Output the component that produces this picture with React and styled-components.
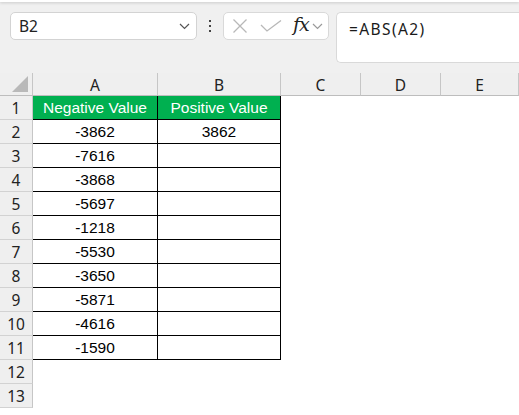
import React from "react";
import styled, {createGlobalStyle} from "styled-components";

const GlobalStyle = createGlobalStyle`
  html, body {
    margin: 0;
    padding: 0;
    background: #f0f0f0;
    overflow: hidden;
  }
  * {
    box-sizing: border-box;
  }
`;

const Page = styled.div`
  width: 519px;
  height: 415px;
  display: flex;
  flex-direction: column;
  background: #f0f0f0;
  font-family: "Liberation Sans", Arial, sans-serif;
  overflow: hidden;
`;

const RibbonEdge = styled.div`
  height: 2px;
  background: #ffffff;
  box-shadow: 0 1px 3px rgba(0, 0, 0, 0.18);
`;

const FormulaRow = styled.div`
  display: flex;
  align-items: flex-start;
  padding: 10px 0 0 10px;
  height: 71px;
`;

const NameBox = styled.div`
  width: 187px;
  height: 28px;
  display: flex;
  align-items: center;
  justify-content: space-between;
  padding: 0 6px 0 8px;
  background: #ffffff;
  border: 1px solid #d3d3d3;
  border-radius: 5px;
  font-family: "Noto Sans", "Liberation Sans", sans-serif;
  font-size: 15.5px;
  color: #222222;
`;

const Dots = styled.div`
  width: 26px;
  height: 28px;
  display: flex;
  flex-direction: column;
  align-items: center;
  justify-content: center;
  gap: 3px;
`;

const Dot = styled.span`
  width: 2px;
  height: 2px;
  background: #444444;
`;

const Controls = styled.div`
  width: 106px;
  height: 28px;
  display: flex;
  align-items: center;
  padding: 0 4px 0 8px;
  background: #ffffff;
  border: 1px solid #d9d9d9;
  border-radius: 5px;
`;

const Fx = styled.span`
  font-family: "DejaVu Serif", "Liberation Serif", serif;
  font-style: italic;
  font-size: 19px;
  color: #222222;
  margin: -4px 3px 0 11px;
  letter-spacing: -1px;
`;

const FormulaInput = styled.div`
  flex: 1;
  margin-left: 7px;
  height: 51px;
  padding: 5px 0 0 12px;
  background: #ffffff;
  border: 1px solid #d9d9d9;
  border-right: none;
  border-radius: 5px 0 0 5px;
  font-family: "Noto Sans", "Liberation Sans", sans-serif;
  font-size: 15.5px;
  letter-spacing: 1.4px;
  color: #1a1a1a;
`;

const Sheet = styled.div`
  display: flex;
  flex-direction: column;
  background: #ffffff;
  flex: 1;
`;

const Row = styled.div`
  display: flex;
  height: ${({$height}) => $height}px;
`;

const Corner = styled.div`
  width: 33px;
  position: relative;
  background: #efefef;
  border-right: 1px solid #c6c6c6;
  border-bottom: 1px solid #bdbdbd;
`;

const ColHead = styled.div`
  width: ${({$w}) => $w}px;
  flex: ${({$grow}) => ($grow ? 1 : "none")};
  display: flex;
  align-items: center;
  justify-content: center;
  background: #efefef;
  border-right: 1px solid #c6c6c6;
  border-bottom: 1px solid #bdbdbd;
  font-family: "Noto Sans", "Liberation Sans", sans-serif;
  font-size: 15.5px;
  color: #222222;
  padding-top: 1px;
`;

const RowHead = styled.div`
  width: 33px;
  display: flex;
  align-items: center;
  justify-content: center;
  background: #efefef;
  border-right: 1px solid #c6c6c6;
  border-bottom: 1px solid #d2d2d2;
  font-family: "Noto Sans", "Liberation Sans", sans-serif;
  font-size: 15.5px;
  color: #222222;
`;

const Cell = styled.div`
  width: ${({$w}) => $w}px;
  flex: ${({$grow}) => ($grow ? 1 : "none")};
  display: flex;
  align-items: center;
  justify-content: center;
  font-family: "Liberation Sans", Arial, sans-serif;
  font-size: 15.5px;
  color: ${({$head}) => ($head ? "#ffffff" : "#000000")};
  background: ${({$head}) => ($head ? "#00b050" : "#ffffff")};
  border-right: ${({$table}) => ($table ? "1px solid #000000" : "none")};
  border-bottom: ${({$table}) => ($table ? "1px solid #000000" : "none")};
`;

const Chevron = ({color = "#555555"}) => (
  <svg width="11" height="7" viewBox="0 0 11 7">
    <polyline points="1,1 5.5,5.5 10,1" fill="none" stroke={color} strokeWidth="1.2" />
  </svg>
);

const CornerMark = () => (
  <svg width="17" height="16" viewBox="0 0 17 16" style={{position: "absolute", right: 3, bottom: 3}}>
    <polygon points="16,0 16,16 0,16" fill="#b9b9b9" />
  </svg>
);

const columns = [
  {name: "A", w: 125},
  {name: "B", w: 123},
  {name: "C", w: 80},
  {name: "D", w: 80},
  {name: "E", w: 78, grow: true},
];

const values = ["-3862", "-7616", "-3868", "-5697", "-1218", "-5530", "-3650", "-5871", "-4616", "-1590"];

const App = () => {
  const rows = [];
  rows.push(["Negative Value", "Positive Value"]);
  values.forEach((v, i) => rows.push([v, i === 0 ? "3862" : ""]));
  rows.push(null, null);

  return (
    <Page>
      <GlobalStyle />
      <RibbonEdge />
      <FormulaRow>
        <NameBox>
          <span>B2</span>
          <Chevron />
        </NameBox>
        <Dots>
          <Dot />
          <Dot />
          <Dot />
        </Dots>
        <Controls>
          <svg width="16" height="14" viewBox="0 0 16 14">
            <path d="M1.5 0.5 L14.5 13.5 M14.5 0.5 L1.5 13.5" stroke="#b8b8b8" strokeWidth="1.3" fill="none" />
          </svg>
          <svg width="22" height="12" viewBox="0 0 22 12" style={{marginLeft: 12}}>
            <polyline points="1,5 7,11 21,0.5" stroke="#b8b8b8" strokeWidth="1.3" fill="none" />
          </svg>
          <Fx>fx</Fx>
          <Chevron color="#9a9a9a" />
        </Controls>
        <FormulaInput>=ABS(A2)</FormulaInput>
      </FormulaRow>
      <Sheet>
        <Row $height={23}>
          <Corner>
            <CornerMark />
          </Corner>
          {columns.map((c) => (
            <ColHead key={c.name} $w={c.w} $grow={c.grow}>
              {c.name}
            </ColHead>
          ))}
        </Row>
        {rows.map((r, i) => (
          <Row key={i} $height={24}>
            <RowHead>{i + 1}</RowHead>
            <Cell $w={125} $table={!!r} $head={i === 0}>
              {r ? r[0] : ""}
            </Cell>
            <Cell $w={123} $table={!!r} $head={i === 0}>
              {r ? r[1] : ""}
            </Cell>
            <Cell $w={80} />
            <Cell $w={80} />
            <Cell $w={78} $grow />
          </Row>
        ))}
      </Sheet>
    </Page>
  );
};

export default App;
